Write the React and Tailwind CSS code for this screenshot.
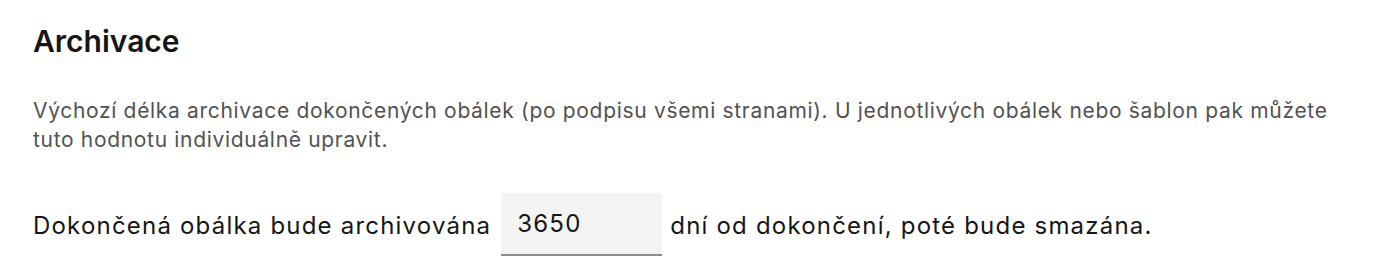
export default function App() {
  return (
    <div className="bg-white min-h-[278px] pl-[33px] pr-6 pt-[22px] text-[#161616]" style={{ fontFamily: '"Inter", "Noto Sans", sans-serif' }}>
      <h2 className="text-[30px] leading-[38px] font-semibold">Archivace</h2>
      <p className="mt-[36px] max-w-[1320px] text-[21px] leading-[29px] tracking-[0.68px] text-[#525252]">
        Výchozí délka archivace dokončených obálek (po podpisu všemi stranami). U jednotlivých obálek nebo šablon pak můžete tuto hodnotu individuálně upravit.
      </p>
      <div className="mt-[39px] flex items-center text-[24px] tracking-[1.2px]">
        <span className="pt-[2px]">Dokončená obálka bude archivována</span>
        <input
          type="text"
          defaultValue="3650"
          className="ml-[10px] mr-[8px] w-[161px] h-[63px] bg-[#f4f4f4] border-b-2 border-[#8d8d8d] px-4 text-[24px] tracking-[1.2px] text-[#161616] outline-none"
        />
        <span className="pt-[2px]">dní od dokončení, poté bude smazána.</span>
      </div>
    </div>
  );
}
